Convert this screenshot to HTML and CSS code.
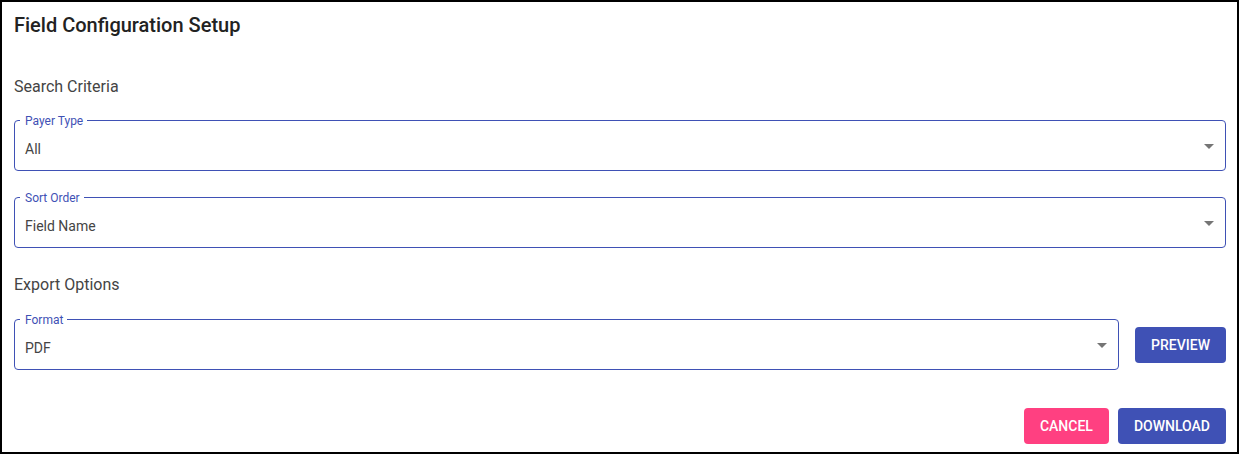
FILE: index.html
```html
<!DOCTYPE html>
<html lang="en">
<head>
<meta charset="utf-8">
<title>Field Configuration Setup</title>
<link rel="stylesheet" href="styles.css">
</head>
<body>
<div class="panel">
  <h1 class="title">Field Configuration Setup</h1>

  <h2 class="section">Search Criteria</h2>
  <div class="field field-first">
    <span class="field-label">Payer Type</span>
    <span class="field-value">All</span>
    <svg class="arrow" viewBox="0 0 24 24" width="24" height="24"><path d="M7 10l5 5 5-5z"/></svg>
  </div>
  <div class="field field-second">
    <span class="field-label">Sort Order</span>
    <span class="field-value">Field Name</span>
    <svg class="arrow" viewBox="0 0 24 24" width="24" height="24"><path d="M7 10l5 5 5-5z"/></svg>
  </div>

  <h2 class="section section-export">Export Options</h2>
  <div class="format-row">
    <div class="field field-format">
      <span class="field-label">Format</span>
      <span class="field-value">PDF</span>
      <svg class="arrow" viewBox="0 0 24 24" width="24" height="24"><path d="M7 10l5 5 5-5z"/></svg>
    </div>
    <button class="btn btn-primary">Preview</button>
  </div>

  <div class="actions">
    <button class="btn btn-secondary">Cancel</button>
    <button class="btn btn-primary">Download</button>
  </div>
</div>
</body>
</html>
```

FILE: styles.css
```css
* { box-sizing: border-box; }

html, body {
  margin: 0;
  padding: 0;
  background: #ffffff;
}

body {
  font-family: Roboto, "Liberation Sans", Arial, sans-serif;
  color: rgba(0, 0, 0, 0.87);
}

.panel {
  width: 1239px;
  height: 454px;
  border: 2px solid #000000;
  padding: 7px 11px 8px 12px;
  display: flex;
  flex-direction: column;
}

.title {
  margin: 0;
  font-size: 20px;
  line-height: 32px;
  font-weight: 500;
  color: #222222;
}

.section {
  margin: 34px 0 0 0;
  font-size: 16px;
  line-height: 24px;
  font-weight: 400;
  color: #444444;
}

.section-export {
  margin-top: 25px;
}

.field {
  position: relative;
  height: 51px;
  border: 1px solid #3f51b5;
  border-radius: 4px;
  display: flex;
  align-items: center;
  padding: 0 4px 0 10px;
}

.field-first { margin-top: 21px; }
.field-second { margin-top: 26px; }

.field-label {
  position: absolute;
  left: 5px;
  top: -6px;
  padding: 0 4px 0 5px;
  background: #ffffff;
  font-size: 12px;
  line-height: 12px;
  color: #3f51b5;
}

.field-value {
  flex: 1;
  margin-top: 7px;
  font-size: 14px;
  line-height: 20px;
  color: #444444;
}

.arrow {
  flex: none;
  fill: rgba(0, 0, 0, 0.54);
}

.format-row {
  margin-top: 22px;
  display: flex;
  align-items: center;
  gap: 16px;
}

.field-format {
  flex: 1;
}

.btn {
  height: 36px;
  min-width: 64px;
  padding: 0 16px;
  border: none;
  border-radius: 4px;
  font-family: Roboto, "Liberation Sans", Arial, sans-serif;
  font-size: 14px;
  font-weight: 500;
  letter-spacing: 0;
  text-transform: uppercase;
  color: #ffffff;
  cursor: pointer;
}

.btn-primary { background: #3f51b5; }
.btn-secondary { background: #ff4081; }

.actions {
  margin-top: 38px;
  display: flex;
  justify-content: flex-end;
  gap: 9px;
}
```
